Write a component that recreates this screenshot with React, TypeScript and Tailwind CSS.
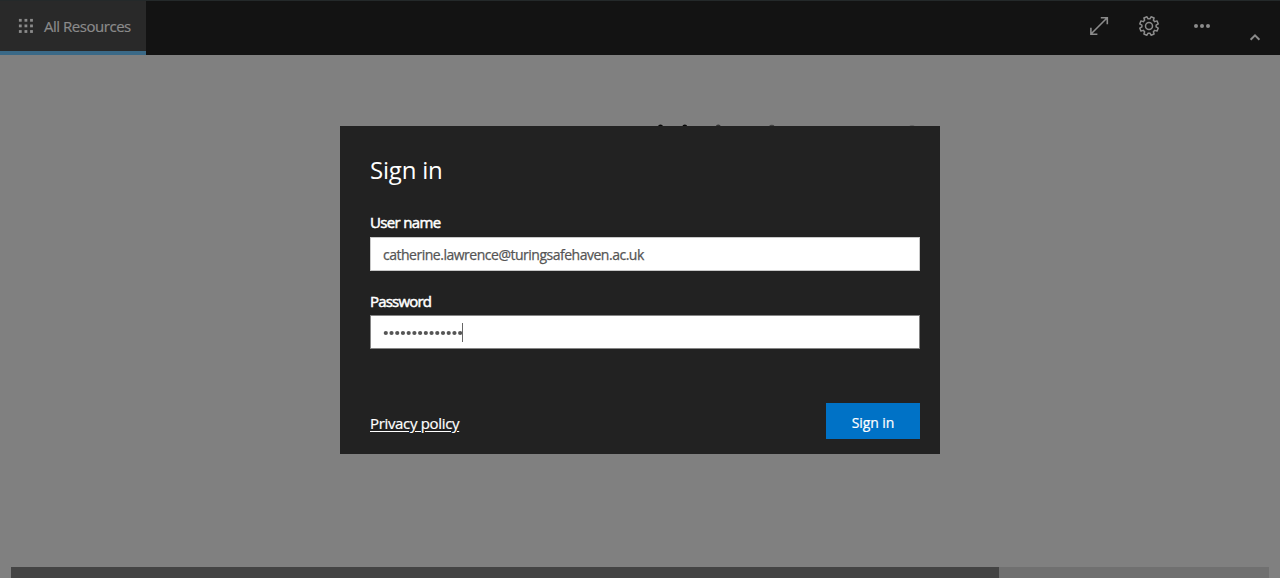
import React from "react";

const gearPath = (() => {
  const points: string[] = [];
  const add = (radius: number, degrees: number) => {
    const a = (degrees * Math.PI) / 180;
    points.push(`${(11 + radius * Math.cos(a)).toFixed(2)} ${(11 + radius * Math.sin(a)).toFixed(2)}`);
  };
  for (let i = 0; i < 8; i++) {
    const c = 22.5 + i * 45;
    add(7.2, c - 15);
    add(9.5, c - 10);
    add(9.5, c + 10);
    add(7.2, c + 15);
  }
  return `M${points.join("L")}Z`;
})();

function GridIcon() {
  return (
    <svg width="16" height="16" viewBox="0 0 16 16" fill="#8b8b8b">
      {[0, 1, 2].map((row) =>
        [0, 1, 2].map((col) => (
          <rect key={`${row}${col}`} x={0.9 + col * 5.6} y={0.9 + row * 5.6} width="2.8" height="2.8" />
        ))
      )}
    </svg>
  );
}

function Header() {
  return (
    <header className="flex h-[55px] justify-between border-t border-[#24292a] bg-[#131313] text-[#8b8b8b]">
      <div className="flex w-[146px] items-center border-b-4 border-[#3a6987] bg-[#292929] pl-[18px]">
        <GridIcon />
        <span className="ml-[10px] whitespace-nowrap text-[15px] leading-5 tracking-[-0.47px] [-webkit-text-stroke:0.2px]">All Resources</span>
      </div>
      <div className="flex pr-[18px]">
        <svg className="mt-[14px]" width="22" height="22" viewBox="0 0 22 22" fill="none" stroke="#8b8b8b" strokeWidth="1.6">
          <path d="M3 19 19.2 2.8M12.8 2.8h6.5v6.5M2.9 12.7v6.5h6.5" />
        </svg>
        <svg className="ml-[28px] mt-[14px]" width="22" height="22" viewBox="0 0 22 22" fill="none" stroke="#8b8b8b" strokeWidth="1.5" strokeLinejoin="round">
          <path d={gearPath} />
          <circle cx="11" cy="11" r="3.5" />
        </svg>
        <svg className="ml-[34px] mt-[22px]" width="16" height="6" viewBox="0 0 16 6" fill="#8b8b8b">
          <circle cx="2" cy="3" r="2" />
          <circle cx="8" cy="3" r="2" />
          <circle cx="14" cy="3" r="2" />
        </svg>
        <svg className="ml-[38px] mt-[30px]" width="14" height="12" viewBox="0 0 14 12" fill="none" stroke="#8b8b8b" strokeWidth="2">
          <path d="m2.6 8.8 4.4-4.4 4.4 4.4" />
        </svg>
      </div>
    </header>
  );
}

function SignInDialog() {
  return (
    <form className="flex h-[328px] w-[600px] flex-col bg-[#222222] pl-[30px] pr-5 pt-[28px] text-white" onSubmit={(e) => e.preventDefault()}>
      <h1 className="text-[24px] leading-8 tracking-[-0.2px]">Sign in</h1>
      <label className="mt-[26px] text-[15px] leading-5 tracking-[-0.65px] [-webkit-text-stroke:0.5px]">User name</label>
      <div className="mt-[5px] flex h-[34px] items-center border border-[#c8c8c8] bg-white pl-3 text-[14px] tracking-[-0.49px] text-[#555555] [-webkit-text-stroke:0.25px]">
        catherine.lawrence@turingsafehaven.ac.uk
      </div>
      <label className="mt-[20px] text-[15px] leading-5 tracking-[-0.8px] [-webkit-text-stroke:0.5px]">Password</label>
      <div className="mt-[4px] flex h-[34px] items-center border border-[#858585] bg-white pl-3">
        <svg width="80" height="20" viewBox="0 0 80 20" fill="#555555">
          {Array.from({ length: 14 }, (_, i) => (
            <circle key={i} cx={2.8 + i * 5.72} cy="11" r="2.1" />
          ))}
        </svg>
        <span className="-ml-px h-[19px] w-px bg-[#666666]" />
      </div>
      <div className="mt-[54px] flex justify-between">
        <a className="mt-[10px] text-[15px] leading-5 tracking-[-0.33px] underline underline-offset-2 [-webkit-text-stroke:0.2px]">Privacy policy</a>
        <button className="h-[36px] w-[94px] bg-[#0072c6] pt-0.5 text-[14px] tracking-[-0.1px] [-webkit-text-stroke:0.2px]">Sign in</button>
      </div>
    </form>
  );
}

export default function App() {
  return (
    <div className="flex h-[578px] w-[1280px] flex-col overflow-hidden bg-[#808080] font-['Open_Sans','Noto_Sans',sans-serif]">
      <Header />
      <main className="flex flex-1 flex-col items-center pt-[67px]">
        <svg width="600" height="4" viewBox="0 0 600 4">
          <ellipse cx="320.5" cy="4" rx="2.3" ry="1.5" fill="#080808" />
          <ellipse cx="344.8" cy="4" rx="2.3" ry="1.5" fill="#080808" />
          <ellipse cx="378.3" cy="4" rx="2.3" ry="1.5" fill="#333333" />
          <ellipse cx="431.8" cy="4" rx="2.5" ry="1.3" fill="#444444" />
          <ellipse cx="572" cy="4" rx="2.5" ry="1" fill="#666666" />
        </svg>
        <SignInDialog />
      </main>
      <div className="mx-[11px] h-[11px] bg-[#707070]">
        <div className="h-full w-[988px] bg-[#444444]" />
      </div>
    </div>
  );
}
